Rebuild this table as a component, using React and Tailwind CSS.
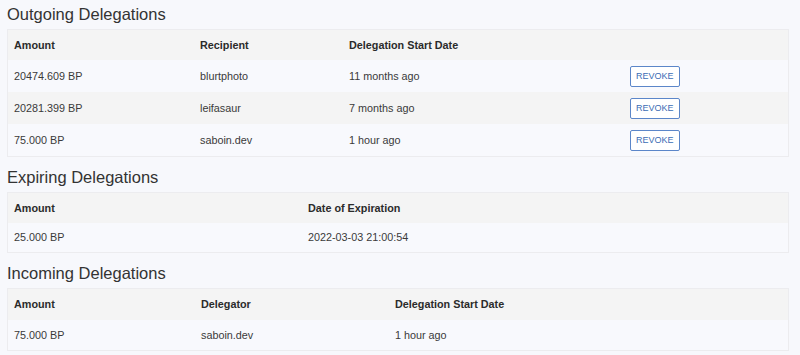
import React from 'react';

const outgoing = [
  { amount: '20474.609 BP', who: 'blurtphoto', date: '11 months ago' },
  { amount: '20281.399 BP', who: 'leifasaur', date: '7 months ago' },
  { amount: '75.000 BP', who: 'saboin.dev', date: '1 hour ago' },
];

function Title({ children, first }) {
  return (
    <h2 className={`text-[16.5px] leading-[20px] text-[#333] font-normal mb-[5px] ${first ? 'mt-0' : 'mt-[10px]'}`}>
      {children}
    </h2>
  );
}

function App() {
  return (
    <div className="min-h-screen bg-[#f7f8fc] px-[7px] pt-[4px] pb-2 text-[#333]" style={{ fontFamily: '"Liberation Sans", Arial, sans-serif' }}>
      {/* Outgoing */}
      <Title first>Outgoing Delegations</Title>
      <div className="w-[782px] border border-[#ececef] text-[10.8px]">
        <div className="grid grid-cols-[186px_149px_281px_1fr] h-[30px] items-center bg-[#f4f4f4] font-bold text-[#2b2b2b]">
          <div className="pl-[6px]">Amount</div>
          <div className="pl-[6px]">Recipient</div>
          <div className="pl-[6px]">Delegation Start Date</div>
          <div></div>
        </div>
        {outgoing.map((r, i) => (
          <div key={r.who} className={`grid grid-cols-[186px_149px_281px_1fr] h-[32px] items-center text-[#3a3a3a] ${i % 2 === 1 ? 'bg-[#f4f4f4]' : 'bg-[#f8f9fd]'}`}>
            <div className="pl-[6px]">{r.amount}</div>
            <div className="pl-[6px]">{r.who}</div>
            <div className="pl-[6px]">{r.date}</div>
            <div className="pl-[6px]">
              <button className="h-[21px] px-[5px] border border-[#5b86c9] rounded-[2px] bg-white text-[#3b6db5] text-[9px] leading-none">
                REVOKE
              </button>
            </div>
          </div>
        ))}
      </div>

      {/* Expiring */}
      <Title>Expiring Delegations</Title>
      <div className="w-[782px] border border-[#ececef] text-[10.8px]">
        <div className="grid grid-cols-[294px_1fr] h-[30px] items-center bg-[#f4f4f4] font-bold text-[#2b2b2b]">
          <div className="pl-[6px]">Amount</div>
          <div className="pl-[6px]">Date of Expiration</div>
        </div>
        <div className="grid grid-cols-[294px_1fr] h-[29px] items-center bg-[#f8f9fd] text-[#3a3a3a]">
          <div className="pl-[6px]">25.000 BP</div>
          <div className="pl-[6px]">2022-03-03 21:00:54</div>
        </div>
      </div>

      {/* Incoming */}
      <Title>Incoming Delegations</Title>
      <div className="w-[782px] border border-[#ececef] text-[10.8px]">
        <div className="grid grid-cols-[187px_194px_1fr] h-[31px] items-center bg-[#f4f4f4] font-bold text-[#2b2b2b]">
          <div className="pl-[6px]">Amount</div>
          <div className="pl-[6px]">Delegator</div>
          <div className="pl-[6px]">Delegation Start Date</div>
        </div>
        <div className="grid grid-cols-[187px_194px_1fr] h-[30px] items-center bg-[#f8f9fd] text-[#3a3a3a]">
          <div className="pl-[6px]">75.000 BP</div>
          <div className="pl-[6px]">saboin.dev</div>
          <div className="pl-[6px]">1 hour ago</div>
        </div>
      </div>
    </div>
  );
}

export default App;
